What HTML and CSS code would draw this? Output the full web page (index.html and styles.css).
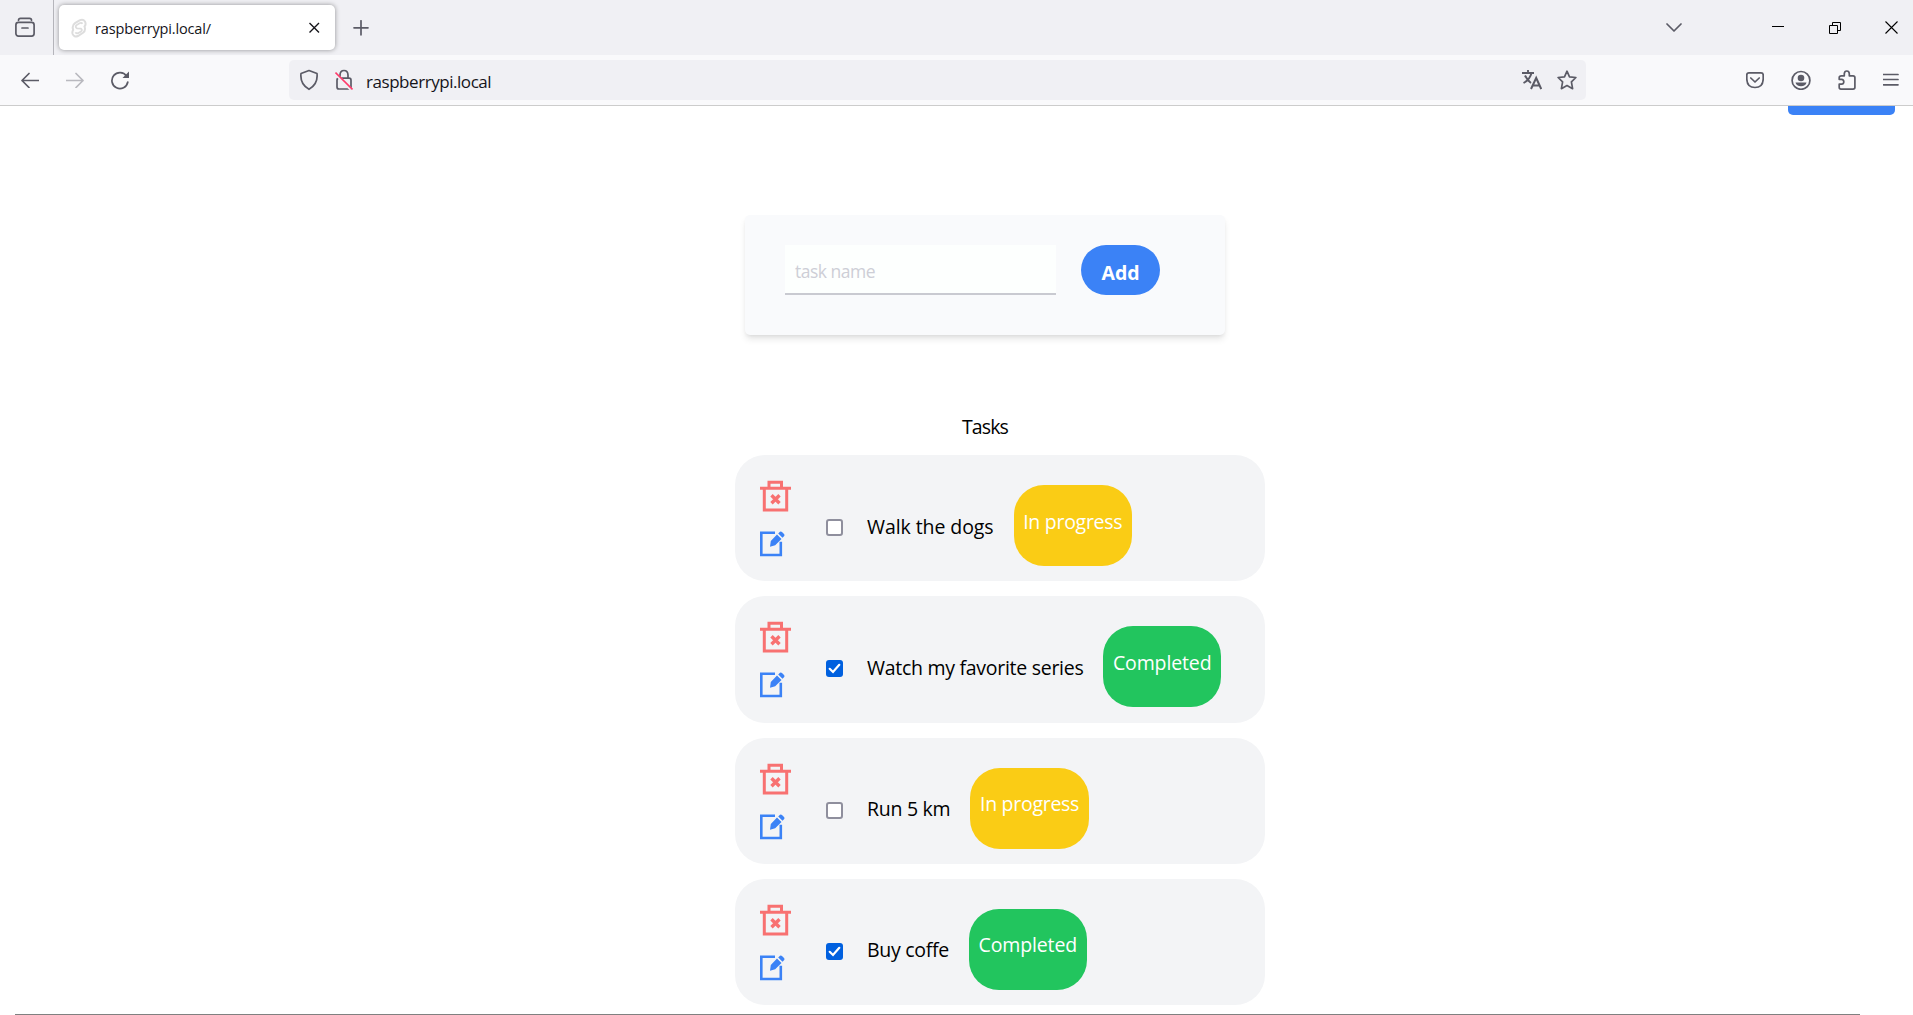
FILE: index.html
```html
<!DOCTYPE html>
<html lang="en">
<head>
<meta charset="utf-8">
<title>raspberrypi.local/</title>
<link rel="stylesheet" href="styles.css">
</head>
<body>
<svg class="defs" width="0" height="0" aria-hidden="true">
  <symbol id="trash" viewBox="0 0 32 32">
    <path d="M0 8.200H31M9 8V2.200H21.500V8M4.300 8V30H26.700V8" fill="none" stroke="#f87171" stroke-width="3"/>
    <path d="M11.500 15.200L19.500 23.200M19.500 15.200L11.500 23.200" fill="none" stroke="#f87171" stroke-width="3.400"/>
  </symbol>
  <symbol id="edit" viewBox="0 0 26 26">
    <path d="M15 1.700H1.300V24H20.800V10.800" fill="none" stroke="#3b82f6" stroke-width="2.600"/>
    <path d="M10 15.800L10.800 10.100L17 3.600L21.500 7.900L15.200 14.300ZM18.200 2.500L20 .7Q21 .1 22 .9L24 2.900Q25 3.900 24.200 5L22.500 6.800Z" fill="#3b82f6"/>
  </symbol>
</svg>

<header class="browser">
  <div class="tabbar">
    <div class="view">
      <svg width="24" height="24" viewBox="0 0 24 24"><path d="M5.500 4.300Q5.500 2.300 7.500 2.300H16.500Q18.500 2.300 18.500 4.300" class="ln"/><rect x="2.900" y="6.400" width="18.200" height="13.700" rx="2.500" class="ln"/><path d="M9 12H15" class="ln"/></svg>
    </div>
    <div class="tab">
      <svg width="16" height="20" viewBox="0 0 16 20"><path d="M8.500 2.400Q12 .6 14 3.500Q15.400 6.500 13.500 8.500Q15 12.500 12 14.800L7 18Q3 19.600 1.600 16Q.9 13.500 2.200 11.800Q.6 7.500 4 5.200Z" fill="none" stroke="#ddd" stroke-width="2"/><path d="M11.500 5.800Q10.500 4.300 8.500 5.300L5.300 7.300Q3.900 9.400 6 10.300L10 10.700Q11.800 12 10 13.400L7 15.200Q5 15.800 4.500 14.300" fill="none" stroke="#ddd" stroke-width="1.800"/></svg>
      <span class="tab-title">raspberrypi.local/</span>
      <svg width="12" height="12" viewBox="0 0 12 12"><path d="M1.500 1L11 10.500M11 1L1.500 10.500" stroke="#15141a" stroke-width="1.400"/></svg>
    </div>
    <svg class="plus" width="16" height="16" viewBox="0 0 16 16"><path d="M8 .8V14.800M1 7.800H15" class="ln"/></svg>
    <div class="window">
      <svg class="chev" width="16" height="10" viewBox="0 0 16 10"><path d="M1 1L8 8L15 1" class="ln"/></svg>
      <svg class="min" width="12" height="12" viewBox="0 0 12 12"><path d="M0 4.500H12" stroke="#000"/></svg>
      <svg class="restore" width="12" height="12" viewBox="0 0 12 12"><path d="M.5 3.500H8.500V11.500H.5ZM3.500 3V.5H11.500V8.500H9" fill="none" stroke="#000"/></svg>
      <svg width="13" height="13" viewBox="0 0 13 13"><path d="M.5 .5L12.500 12.500M12.500 .5L.5 12.500" stroke="#000" stroke-width="1.100"/></svg>
    </div>
  </div>
  <div class="toolbar">
    <div class="nav">
      <svg width="18" height="16" viewBox="0 0 18 16"><path d="M17.500 8.500H1M8 1.500L1 8.500L8 15.500" class="ln"/></svg>
      <svg class="off" width="18" height="16" viewBox="0 0 18 16"><path d="M.5 8.500H17M10 1.500L17 8.500L10 15.500" class="ln"/></svg>
      <svg width="18" height="20" viewBox="0 0 18 20"><path d="M15.500 6A8 8 0 1 0 16.800 12" class="ln"/><path d="M18 1.500V8H11.500Z" fill="#5b5b66"/></svg>
    </div>
    <div class="url">
      <svg class="shield" width="20" height="22" viewBox="0 0 20 22"><path d="M10 1.500L18 4.500Q19.200 15 10 20.300Q.8 15 2 4.500Z" class="ln"/></svg>
      <svg class="lock" width="18" height="22" viewBox="0 0 18 22"><path d="M5 9V6Q5.200 1.500 9 1.500T13 6V9M4.500 9.200H14Q16 9.200 16 11.200V18Q16 20 14 20H4Q2 20 2 18V11.200Q2 9.200 4 9.200" class="ln"/><path d="M0 4.500L16 20.500" stroke="#f0f0f4" stroke-width="3"/><path d="M.5 3.500L17.500 20.500" stroke="#ff3b6b" stroke-width="1.600"/></svg>
      <span class="url-text">raspberrypi.local</span>
      <svg class="translate" width="20" height="20" viewBox="0 0 20 20"><path d="M0 3H12M6 0V3M9.500 3Q8 9.500 1.500 13M3 5.500Q5.500 10.500 9 13" fill="none" stroke="#5b5b66" stroke-width="1.900"/><path d="M9 19L14.200 8L19.200 19M11 15.500H17.500" fill="none" stroke="#5b5b66" stroke-width="2"/></svg>
      <svg width="20" height="20" viewBox="0 0 20 20"><path d="M10 1.200L12.500 6.800L18.900 7.500L14.400 11.900L15.600 18.700L10 15.500L4.400 18.700L5.600 11.900L1.100 7.500L7.500 6.800Z" class="ln"/></svg>
    </div>
    <div class="actions">
      <svg width="18" height="18" viewBox="0 0 18 18"><path d="M3 1.800H15Q17.200 1.800 17.200 4V8Q17 16.500 9 16.500T.8 8V4Q.8 1.800 3 1.800ZM4.800 7L9 11L13.200 7" class="ln"/></svg>
      <svg width="20" height="20" viewBox="0 0 20 20"><circle cx="10" cy="10.400" r="8.900" class="ln"/><circle cx="10" cy="8" r="3.300" fill="#5b5b66"/><path d="M4.500 12.400H15.500Q14.500 16.200 10 16.200T4.500 12.400Z" fill="#5b5b66"/></svg>
      <svg width="18" height="20" viewBox="0 0 18 20"><path d="M3.500 5.800H6.300V3.600Q6.500 1 8.800 1T11.300 3.600V5.800H15Q16.900 5.800 16.900 7.700V17.200Q16.900 19.100 15 19.100H3Q1.200 19.100 1.200 17.200V14.200H3.500Q5.800 14 5.800 11.700T3.500 9.300H1.200V7.700Q1.200 5.800 3.500 5.800Z" class="ln"/></svg>
      <svg width="16" height="14" viewBox="0 0 16 14"><path d="M.5 1.500H15M.5 6.500H15M.5 11.800H15" class="ln"/></svg>
    </div>
  </div>
</header>

<main class="page">
  <div class="topbtn"></div>
  <form class="add-form">
    <input class="task-input" type="text" placeholder="task name">
    <button class="add" type="button">Add</button>
  </form>
  <h2 class="heading">Tasks</h2>
  <ul class="tasks">
    <li class="task">
      <div class="tools"><svg class="trash"><use href="#trash"/></svg><svg class="edit"><use href="#edit"/></svg></div>
      <span class="check"></span>
      <span class="name loose">Walk the dogs</span>
      <span class="badge progress">In progress</span>
    </li>
    <li class="task">
      <div class="tools"><svg class="trash"><use href="#trash"/></svg><svg class="edit"><use href="#edit"/></svg></div>
      <span class="check on"><svg width="17" height="17" viewBox="0 0 17 17"><path d="M3.700 8.800L7 12L13.300 4.800" fill="none" stroke="#fff" stroke-width="2.200" stroke-linecap="round"/></svg></span>
      <span class="name">Watch my favorite series</span>
      <span class="badge done">Completed</span>
    </li>
    <li class="task">
      <div class="tools"><svg class="trash"><use href="#trash"/></svg><svg class="edit"><use href="#edit"/></svg></div>
      <span class="check"></span>
      <span class="name">Run 5 km</span>
      <span class="badge progress">In progress</span>
    </li>
    <li class="task">
      <div class="tools"><svg class="trash"><use href="#trash"/></svg><svg class="edit"><use href="#edit"/></svg></div>
      <span class="check on"><svg width="17" height="17" viewBox="0 0 17 17"><path d="M3.700 8.800L7 12L13.300 4.800" fill="none" stroke="#fff" stroke-width="2.200" stroke-linecap="round"/></svg></span>
      <span class="name">Buy coffe</span>
      <span class="badge done">Completed</span>
    </li>
  </ul>
  <hr class="rule">
</main>
</body>
</html>
```
FILE: styles.css
```css
* { box-sizing: border-box; }
body {
  margin: 0;
  height: 1015px;
  overflow: hidden;
  background: #fff;
  color: #000;
  font-family: "Open Sans", "Noto Sans", sans-serif;
  font-size: 19.5px;
}
svg { display: block; flex: none; }
.defs { position: absolute; }
.ln { fill: none; stroke: #5b5b66; stroke-width: 1.7; stroke-linejoin: round; stroke-linecap: round; }

.browser { height: 106px; border-bottom: 1px solid #ccc; background: #f9f9fb; }
.tabbar { display: flex; align-items: center; height: 55px; background: #f0f0f4; }
.view { display: flex; align-items: center; width: 54px; height: 55px; padding-left: 13px; border-right: 1px solid #b5b5bb; }
.tab {
  display: flex; align-items: center;
  width: 276px; height: 45px; margin-left: 5px; padding: 0 15px 0 12px;
  border-radius: 5px; background: #fff; box-shadow: 0 0 5px rgba(0, 0, 0, .4);
}
.tab-title { flex: 1; margin-left: 8px; font-size: 14.5px; letter-spacing: -.15px; line-height: 20px; padding-top: 2px; color: #15141a; }
.plus { margin-left: 18px; }
.window { display: flex; align-items: center; margin-left: auto; padding-right: 15px; }
.chev { margin-right: 90px; }
.min { margin-right: 45px; }
.restore { margin-right: 44px; }

.toolbar { display: flex; align-items: center; height: 50px; }
.nav { display: flex; align-items: center; gap: 27px; width: 289px; padding-left: 21px; }
.off { opacity: .4; }
.url { display: flex; align-items: center; width: 1297px; height: 40px; padding: 0 9px 0 10px; border-radius: 5px; background: #f0f0f4; }
.lock { margin-left: 16px; }
.url-text { flex: 1; margin-left: 13px; padding-top: 3px; font-size: 17px; letter-spacing: -.45px; line-height: 22px; color: #15141a; }
.translate { margin-right: 15px; }
.actions { display: flex; align-items: center; gap: 27px; margin-left: auto; padding-right: 14px; }

.page { display: flex; flex-direction: column; }
.topbtn { align-self: flex-end; width: 107px; height: 9px; margin-right: 18px; border-radius: 0 0 5px 5px; background: #3b82f6; }
.add-form {
  display: flex; align-items: flex-start; gap: 25px;
  width: 480px; height: 120px; margin: 100px 0 0 745px; padding: 30px 40px;
  border-radius: 5px; background: #f9fafc;
  box-shadow: 0 5px 7px -1px rgba(0, 0, 0, .1), 0 2px 4px -2px rgba(0, 0, 0, .1);
}
.task-input {
  width: 271px; height: 50px; padding: 4px 10px 0; border: 0; border-bottom: 2px solid #c9cad1;
  border-radius: 0; background: #fdfffe; font: 17.5px "Open Sans", sans-serif; letter-spacing: -.5px;
}
.task-input::placeholder { color: #cdced6; opacity: 1; }
.add { width: 79px; height: 50px; padding: 4px 0 0; border: 0; border-radius: 25px; background: #3b82f6; color: #fff; font: 700 19.5px "Open Sans", sans-serif; }
.heading { width: 480px; margin: 77px 0 0 745px; font-size: 19.5px; font-weight: 400; letter-spacing: -.9px; line-height: 30px; text-align: center; }
.tasks { display: flex; flex-direction: column; gap: 15px; width: 530px; margin: 13px 0 0 735px; padding: 0; list-style: none; }
.task { display: flex; align-items: flex-start; height: 126.25px; padding: 25px; border-radius: 30px; background: #f3f4f6; }
.tools { display: flex; flex-direction: column; gap: 19px; width: 66px; }
.trash { width: 32px; height: 32px; }
.edit { width: 26px; height: 26px; }
.check { display: flex; width: 17px; height: 17px; margin-top: 39px; border: 2px solid #8f8f9d; border-radius: 3px; background: #fff; }
.check.on { border: 0; background: #0060df; }
.name { margin: 31.500px 0 0 24px; letter-spacing: -.28px; line-height: 30px; white-space: nowrap; }
.name.loose { letter-spacing: -.08px; }
.badge { height: 81px; margin: 5px 0 0 20px; padding: 21.500px 0 0; border-radius: 30px; color: #fff; line-height: 30px; text-align: center; white-space: nowrap; }
.progress { width: 118.500px; background: #facc15; letter-spacing: -.28px; }
.done { width: 117.500px; background: #22c55e; letter-spacing: -.13px; }
.rule { width: 1845px; height: 1px; margin: 9px 0 0 15px; border: 0; background: #808080; }
```
